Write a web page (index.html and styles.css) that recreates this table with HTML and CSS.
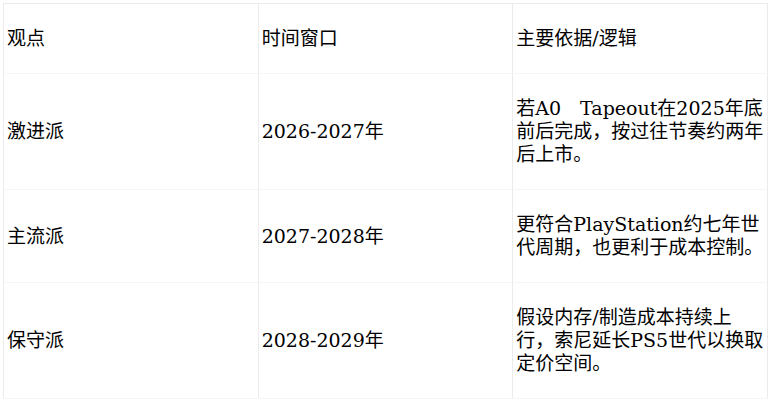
FILE: index.html
```html
<!DOCTYPE html>
<html lang="zh-CN">
<head>
<meta charset="utf-8">
<title>观点</title>
<link rel="stylesheet" href="styles.css">
</head>
<body>
<table class="grid">
  <colgroup><col class="c"><col class="c"><col class="c"></colgroup>
  <thead>
    <tr><th>观点</th><th>时间窗口</th><th>主要依据/逻辑</th></tr>
  </thead>
  <tbody>
    <tr><td>激进派</td><td>2026-2027年</td><td>若A0　Tapeout在2025年底前后完成，按过往节奏约两年后上市。</td></tr>
    <tr><td>主流派</td><td>2027-2028年</td><td>更符合PlayStation约七年世代周期，也更利于成本控制。</td></tr>
    <tr><td>保守派</td><td>2028-2029年</td><td>假设内存/制造成本持续上行，索尼延长PS5世代以换取定价空间。</td></tr>
  </tbody>
</table>
</body>
</html>
```
FILE: styles.css
```css
html, body {
  margin: 0;
  background: #fff;
}
body {
  padding: 3px;
  font-family: "DejaVu Serif", "Noto Sans CJK SC", serif;
  font-size: 19px;
  color: #000;
}
.grid {
  width: 765px;
  table-layout: fixed;
  border-collapse: collapse;
}
.grid th,
.grid td {
  border-left: 1px solid #ebebeb;
  border-right: 1px solid #ebebeb;
  border-top: 1px solid #f5f5f5;
  border-bottom: 1px solid #f5f5f5;
  padding: 23px 3px;
  line-height: 23px;
  text-align: left;
  vertical-align: middle;
  font-weight: normal;
}
.grid thead th {
  border-top-color: #ebebeb;
}
```
